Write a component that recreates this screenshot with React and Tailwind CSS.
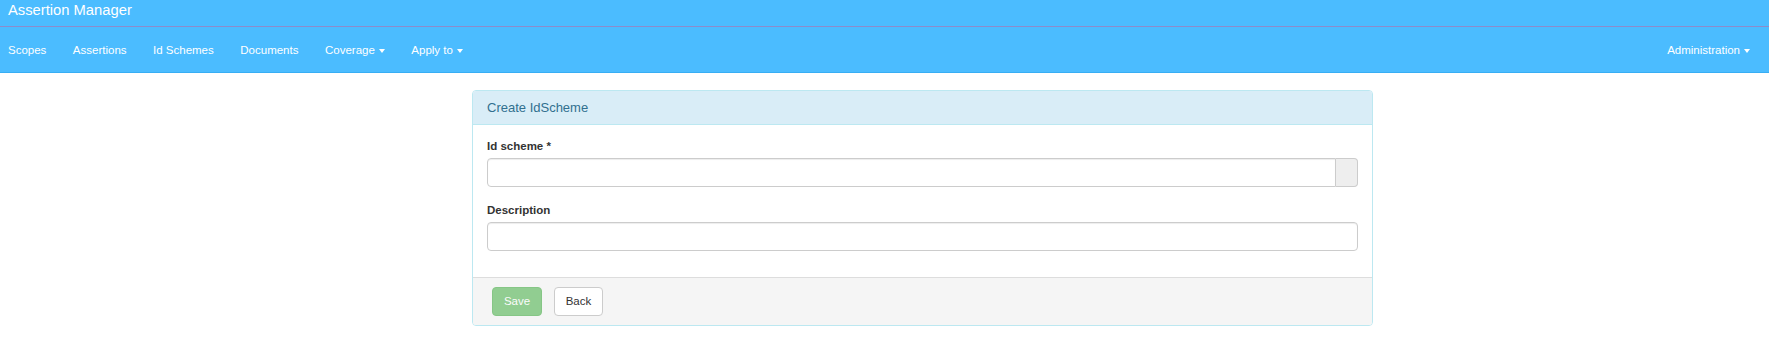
import { useState } from "react";

const font = {
  fontFamily: '"Liberation Sans", Arial, sans-serif',
};

function Caret() {
  return (
    <span className="inline-block ml-[4px] align-middle w-0 h-0 border-t-[4px] border-t-white border-x-[3px] border-x-transparent" />
  );
}

function App() {
  const [scheme, setScheme] = useState("");

  const [description, setDescription] = useState("");

  const links = ["Scopes", "Assertions", "Id Schemes", "Documents"];

  return (
    <div className="min-h-screen bg-white" style={font}>
      {/* ========================= */}
      {/* NAVBAR */}
      {/* ========================= */}

      <div className="bg-[#4bbcff] border-b border-[#38aef4]">
        <div className="h-[26px] px-[8px] text-[14.75px] leading-[20px] text-white">
          Assertion Manager
        </div>

        <div className="h-px bg-[#8c8ccb]" />

        <div className="h-[45px] flex items-center justify-between pt-[3px] pl-[8px] pr-[19px] text-[11.5px] text-white">
          <div className="flex items-center gap-[26.5px]">
            {links.map((link) => (
              <span key={link}>{link}</span>
            ))}

            <span>
              Coverage
              <Caret />
            </span>

            <span>
              Apply to
              <Caret />
            </span>
          </div>

          <span>
            Administration
            <Caret />
          </span>
        </div>
      </div>

      {/* ========================= */}
      {/* PANEL */}
      {/* ========================= */}

      <div className="ml-[472px] mt-[17px] w-[901px] border border-[#bce8f1] rounded-[4px] overflow-hidden">
        <div className="h-[34px] flex items-center bg-[#d9edf7] border-b border-[#bce8f1] px-[14px] text-[13px] text-[#31708f]">
          Create IdScheme
        </div>

        <div className="px-[14px] pt-[14px] pb-[26px]">
          <label className="block text-[11.5px] leading-[15px] font-bold text-[#333] mb-[4px]">
            Id scheme *
          </label>

          <div className="flex h-[29px] mb-[16px]">
            <input
              value={scheme}
              onChange={(e) => setScheme(e.target.value)}
              className="flex-1 min-w-0 border border-[#ccc] rounded-l-[4px] px-[10px] text-[11.5px] outline-none shadow-[inset_0_1px_1px_rgba(0,0,0,0.075)]"
            />

            <span className="w-[22px] bg-[#eee] border border-l-0 border-[#ccc] rounded-r-[4px]" />
          </div>

          <label className="block text-[11.5px] leading-[15px] font-bold text-[#333] mb-[4px]">
            Description
          </label>

          <input
            value={description}
            onChange={(e) => setDescription(e.target.value)}
            className="block w-full h-[29px] border border-[#ccc] rounded-[4px] px-[10px] text-[11.5px] outline-none shadow-[inset_0_1px_1px_rgba(0,0,0,0.075)]"
          />
        </div>

        <div className="flex gap-[12px] bg-[#f5f5f5] border-t border-[#ddd] px-[19px] pt-[9px] pb-[9px]">
          <button
            disabled
            className="h-[29px] w-[50px] rounded-[4px] bg-[#5cb85c] border border-[#4cae4c] opacity-65 text-white text-[11.5px]"
          >
            Save
          </button>

          <button className="h-[29px] w-[49px] rounded-[4px] bg-white border border-[#ccc] text-[#333] text-[11.5px]">
            Back
          </button>
        </div>
      </div>
    </div>
  );
}

export default App;
